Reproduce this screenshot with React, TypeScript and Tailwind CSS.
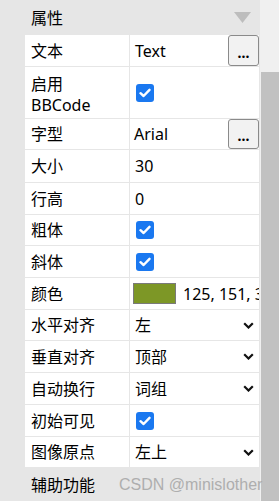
import React from "react";

const font = { fontFamily: '"Noto Sans", "Noto Sans CJK SC", sans-serif' };

function Check() {
  return (
    <div className="w-[18px] h-[18px] rounded-[3px] bg-[#1a78f0] flex items-center justify-center">
      <svg width="12" height="10" viewBox="0 0 12 10">
        <polyline points="1.5,5.2 4.6,8 10.5,1.8" fill="none" stroke="#fff" strokeWidth="2.4" strokeLinecap="round" strokeLinejoin="round" />
      </svg>
    </div>
  );
}

function Chevron() {
  return (
    <svg width="11" height="7" viewBox="0 0 11 7" className="mr-[5px] shrink-0">
      <polyline points="1.2,1.2 5.5,5.5 9.8,1.2" fill="none" stroke="#111" strokeWidth="2.2" />
    </svg>
  );
}

function Dots() {
  return (
    <div className="ml-auto w-[31px] h-full rounded-[3px] border border-[#8a8a8a] bg-[#f2f2f2] flex items-end justify-center pb-[7px] shrink-0">
      <span className="text-[14px] leading-[10px] font-bold tracking-[0px]">...</span>
    </div>
  );
}

type Row = { label: React.ReactNode; h: string; value: React.ReactNode; tall?: boolean };

export default function App() {
  const rows: Row[] = [
    {
      label: "文本",
      h: "h-[32px]",
      value: (
        <>
          <span className="pl-[5px]">Text</span>
          <Dots />
        </>
      ),
    },
    {
      label: (
        <div className="leading-[21px] pt-[4px]">
          启用
          <br />
          BBCode
        </div>
      ),
      h: "h-[52px]",
      value: (
        <div className="pl-[6px]">
          <Check />
        </div>
      ),
    },
    {
      label: "字型",
      h: "h-[31px]",
      value: (
        <>
          <span className="pl-[4px]">Arial</span>
          <Dots />
        </>
      ),
    },
    { label: "大小", h: "h-[33px]", value: <span className="pl-[5px]">30</span> },
    { label: "行高", h: "h-[32px]", value: <span className="pl-[5px]">0</span> },
    {
      label: "粗体",
      h: "h-[31px]",
      value: (
        <div className="pl-[6px]">
          <Check />
        </div>
      ),
    },
    {
      label: "斜体",
      h: "h-[32px]",
      value: (
        <div className="pl-[6px]">
          <Check />
        </div>
      ),
    },
    {
      label: "颜色",
      h: "h-[32px]",
      value: (
        <>
          <div className="ml-[3px] w-[43px] h-[21px] border border-[#7a7a7a] bg-[#7d9726] shrink-0" />
          <span className="pl-[7px] whitespace-nowrap">125, 151, 38, 255</span>
        </>
      ),
    },
    {
      label: "水平对齐",
      h: "h-[31px]",
      value: (
        <>
          <span className="pl-[5px]">左</span>
          <span className="ml-auto" />
          <Chevron />
        </>
      ),
    },
    {
      label: "垂直对齐",
      h: "h-[32px]",
      value: (
        <>
          <span className="pl-[5px]">顶部</span>
          <span className="ml-auto" />
          <Chevron />
        </>
      ),
    },
    {
      label: "自动换行",
      h: "h-[32px]",
      value: (
        <>
          <span className="pl-[5px]">词组</span>
          <span className="ml-auto" />
          <Chevron />
        </>
      ),
    },
    {
      label: "初始可见",
      h: "h-[32px]",
      value: (
        <div className="pl-[6px]">
          <Check />
        </div>
      ),
    },
    {
      label: "图像原点",
      h: "h-[31px]",
      value: (
        <>
          <span className="pl-[5px]">左上</span>
          <span className="ml-auto" />
          <Chevron />
        </>
      ),
    },
  ];

  return (
    <div className="relative w-[279px] h-[501px] overflow-hidden flex text-[16px] text-black" style={font}>
      <div className="w-[260px] h-full bg-[#e6e6e6] flex flex-col">
        <div className="h-[35px] shrink-0 flex items-center pl-[31px] pr-[9px]">
          <span>属性</span>
          <svg width="17" height="11" viewBox="0 0 17 11" className="ml-auto">
            <polygon points="0,0 17,0 8.5,11" fill="#bdbdbd" />
          </svg>
        </div>
        <div className="ml-[25px] w-[234px] bg-white flex flex-col shrink-0">
          {rows.map((r, i) => (
            <div key={i} className={`${r.h} flex border-b border-[#e6e6e6] shrink-0`}>
              <div className="w-[105px] border-r border-[#e6e6e6] pl-[6px] flex items-center shrink-0 leading-[20px]">
                {r.label}
              </div>
              <div className="flex-1 min-w-0 flex items-center overflow-hidden leading-[20px]">{r.value}</div>
            </div>
          ))}
        </div>
        <div className="flex-1 flex items-center pl-[31px]">
          <span>辅助功能</span>
        </div>
      </div>
      <div className="flex-1 h-full bg-[#f0f0f0] flex flex-col pl-[1px]">
        <div className="mt-[72px] flex-1 bg-[#c1c1c1]" />
      </div>
      <div
        className="absolute left-[119px] top-[475px] text-[16px] text-[#a9a9a9] whitespace-nowrap leading-[20px] opacity-90"
        style={{ fontFamily: '"Liberation Sans", Arial, sans-serif' }}
      >
        CSDN @minislother
      </div>
    </div>
  );
}
